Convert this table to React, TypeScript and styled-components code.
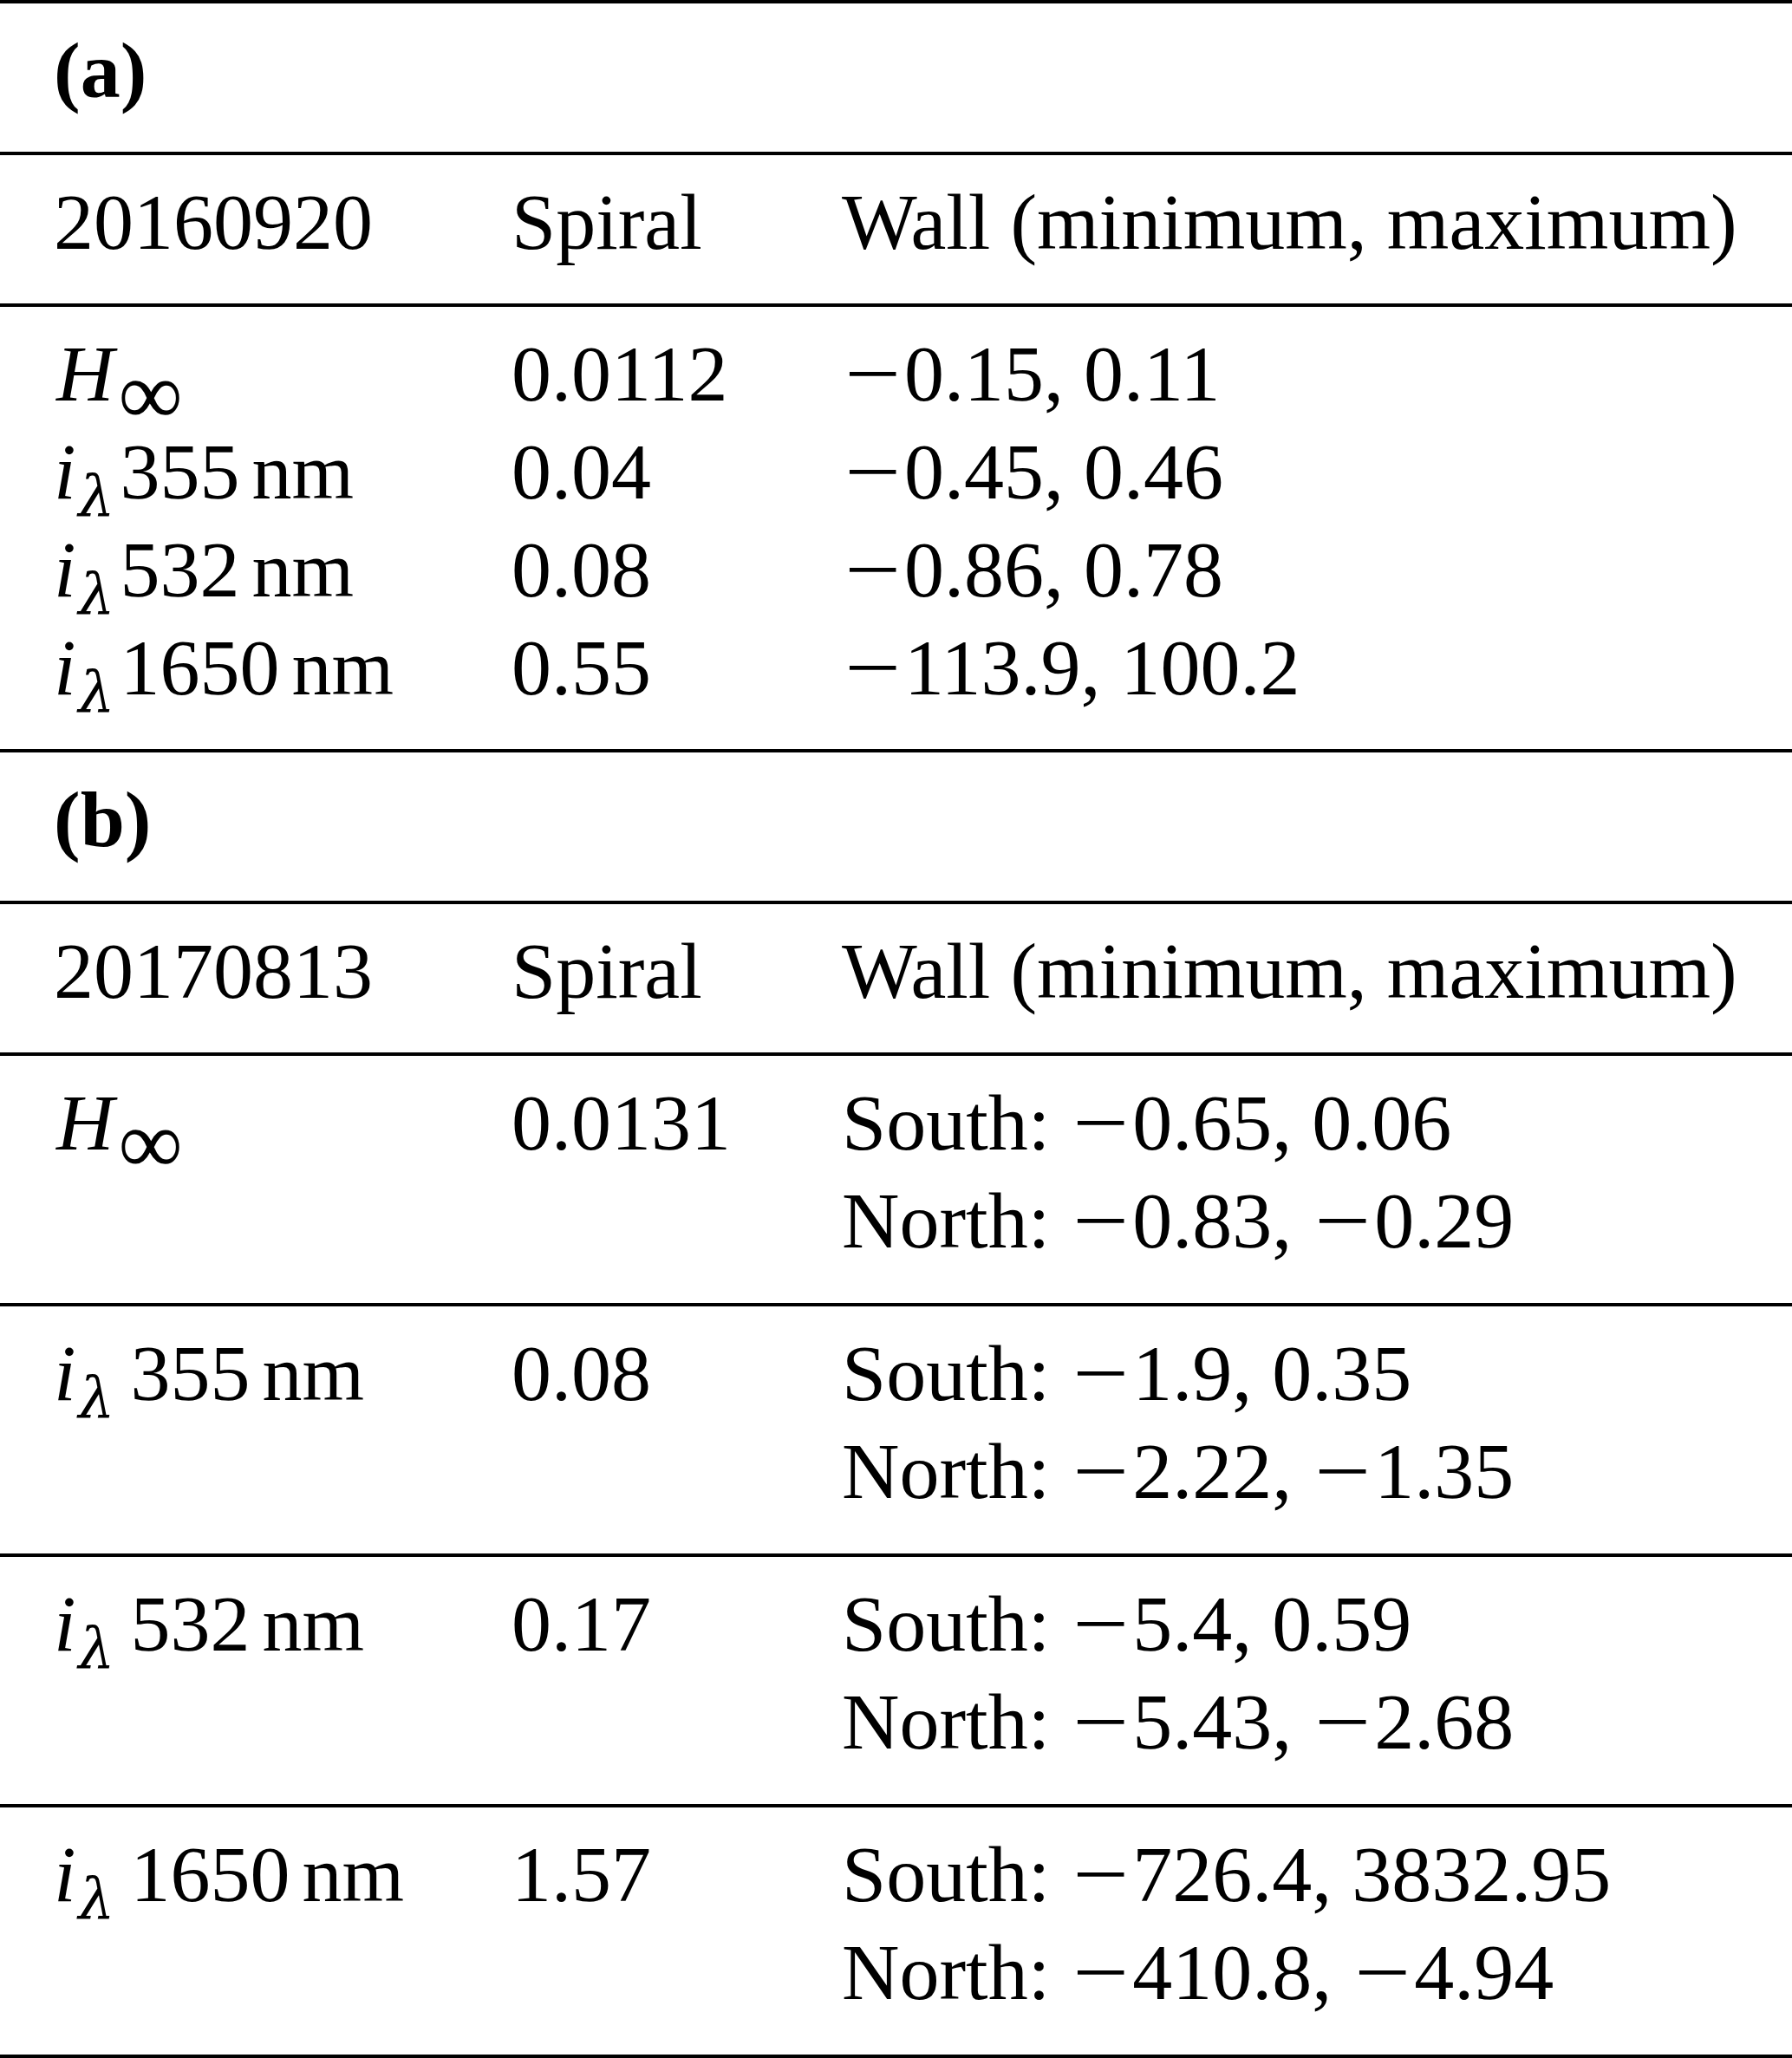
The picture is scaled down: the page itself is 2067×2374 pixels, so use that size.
import React from "react";
import styled, { createGlobalStyle } from "styled-components";

const Global = createGlobalStyle`
  html, body { margin: 0; padding: 0; background: #fff; }
  body { font-family: "Liberation Serif", "Times New Roman", serif; }
`;

const Table = styled.div`
  width: 2067px;
  font-family: "Liberation Serif", "Times New Roman", serif;
  font-size: 92px;
  line-height: 113px;
  color: #000;
  border-top: 4px solid #000;
`;

const Block = styled.div<{ $tall?: boolean }>`
  display: grid;
  grid-template-columns: 528px 381px 1fr;
  padding: 21px 0 ${(p) => (p.$tall ? "38px" : "37px")} 62px;
  border-bottom: 4px solid #000;
  white-space: nowrap;
`;

const Title = styled.div`
  grid-column: 1 / -1;
  font-weight: bold;
`;

const Cell = styled.div``;

const Italic = styled.span<{ $shift?: number }>`
  font-style: italic;
  margin-left: ${(p) => p.$shift ?? 0}px;
`;

const Lambda = styled.span<{ $spaced?: boolean }>`
  font-family: "DejaVu Serif", "Liberation Serif", serif;
  font-style: italic;
  font-size: 66px;
  line-height: 0;
  vertical-align: -20px;
  margin-left: 3px;
  margin-right: ${(p) => (p.$spaced ? "18px" : "6px")};
`;

const Infinity = styled.span`
  font-size: 104px;
  line-height: 0;
  vertical-align: -27px;
  margin-left: 5px;
`;

const Unit = styled.span`
  margin-left: 14px;
`;

const Minus = styled.span`
  display: inline-block;
  width: 72px;
  text-align: center;
  transform: scaleX(1.25);
`;

const MathText = ({ text }: { text: string }) => {
  const parts = text.split("−");
  return (
    <>
      {parts.map((p, i) => (
        <React.Fragment key={i}>
          {i > 0 && <Minus>−</Minus>}
          {p}
        </React.Fragment>
      ))}
    </>
  );
};

type Row = { label: React.ReactNode; spiral: string; wall: string[] };

const Wavelength = ({ nm, spaced }: { nm: string; spaced?: boolean }) => (
  <>
    <Italic>i</Italic>
    <Lambda $spaced={spaced}>λ</Lambda>
    {nm}
    <Unit>nm</Unit>
  </>
);

const HInf = () => (
  <>
    <Italic $shift={3}>H</Italic>
    <Infinity>∞</Infinity>
  </>
);

const rowsA: Row[] = [
  { label: <HInf />, spiral: "0.0112", wall: ["−0.15, 0.11"] },
  { label: <Wavelength nm="355" />, spiral: "0.04", wall: ["−0.45, 0.46"] },
  { label: <Wavelength nm="532" />, spiral: "0.08", wall: ["−0.86, 0.78"] },
  { label: <Wavelength nm="1650" />, spiral: "0.55", wall: ["−113.9, 100.2"] },
];

const rowsB: Row[] = [
  { label: <HInf />, spiral: "0.0131", wall: ["South: −0.65, 0.06", "North: −0.83, −0.29"] },
  { label: <Wavelength nm="355" spaced />, spiral: "0.08", wall: ["South: −1.9, 0.35", "North: −2.22, −1.35"] },
  { label: <Wavelength nm="532" spaced />, spiral: "0.17", wall: ["South: −5.4, 0.59", "North: −5.43, −2.68"] },
  { label: <Wavelength nm="1650" spaced />, spiral: "1.57", wall: ["South: −726.4, 3832.95", "North: −410.8, −4.94"] },
];

const Header = ({ date }: { date: string }) => (
  <Block>
    <Cell>{date}</Cell>
    <Cell>Spiral</Cell>
    <Cell>Wall (minimum, maximum)</Cell>
  </Block>
);

export default function App() {
  return (
    <>
      <Global />
      <Table>
        <Block>
          <Title>(a)</Title>
        </Block>
        <Header date="20160920" />
        <Block>
          {rowsA.map((r, i) => (
            <React.Fragment key={i}>
              <Cell>{r.label}</Cell>
              <Cell>{r.spiral}</Cell>
              <Cell>
                <MathText text={r.wall[0]} />
              </Cell>
            </React.Fragment>
          ))}
        </Block>
        <Block>
          <Title>(b)</Title>
        </Block>
        <Header date="20170813" />
        {rowsB.map((r, i) => (
          <Block key={i} $tall>
            <Cell>{r.label}</Cell>
            <Cell>{r.spiral}</Cell>
            <Cell>
              {r.wall.map((w, j) => (
                <div key={j}>
                  <MathText text={w} />
                </div>
              ))}
            </Cell>
          </Block>
        ))}
      </Table>
    </>
  );
}
